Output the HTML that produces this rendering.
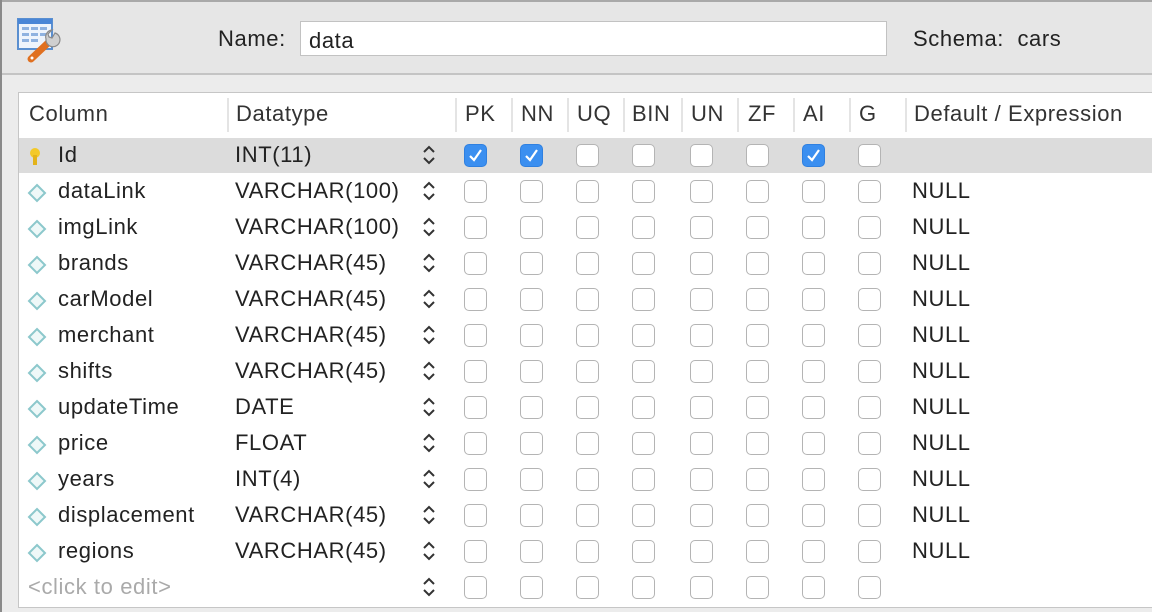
<!DOCTYPE html>
<html><head><meta charset="utf-8"><style>
*{margin:0;padding:0;box-sizing:border-box}
body{width:1152px;height:612px;overflow:hidden;background:#ececec;font-family:"Liberation Sans",sans-serif;position:relative;color:#222}
.top{position:absolute;left:0;top:0;width:1152px;height:75px;background:#e6e6e6;border-top:2px solid #a9a9a9;border-bottom:2px solid #c4c4c4}
.lb{position:absolute;left:0;top:0;width:2px;height:612px;background:#8a8a8a}
.t{position:absolute;font-size:22px;letter-spacing:0.6px;white-space:nowrap;line-height:24px}
.inp{position:absolute;left:300px;top:21px;width:587px;height:35px;background:#fff;border:1px solid #c2c2c2}
.tbl{position:absolute;left:18px;top:92px;width:1140px;height:516px;background:#fff;border:1px solid #c6c6c6}
.sel{position:absolute;left:19px;top:138px;width:1133px;height:35px;background:#dcdcdc}
.div{position:absolute;top:98px;width:2px;height:34px;background:#e4e4e4}
.cb{position:absolute;width:23px;height:23px;border:1px solid #b4b4b4;border-radius:5px;background:#fff}
.cb.on{background:#3b8ff0;border-color:#2f80e0}
</style></head><body>
<div class="top"></div><div class="lb"></div>
<svg style="position:absolute;left:17px;top:17px" width="48" height="48" viewBox="0 0 48 48">
<rect x="1" y="2" width="34" height="30" fill="#eef4fc" stroke="#5a8fd0" stroke-width="2"/>
<rect x="1" y="2" width="34" height="5" fill="#4a86d6"/>
<g fill="#8fb2e0"><rect x="5" y="10" width="7" height="3"/><rect x="14" y="10" width="7" height="3"/><rect x="23" y="10" width="7" height="3"/><rect x="5" y="16" width="7" height="3"/><rect x="14" y="16" width="7" height="3"/><rect x="23" y="16" width="7" height="3"/><rect x="5" y="22" width="7" height="3"/><rect x="14" y="22" width="7" height="3"/></g>
<path d="M14 42 L32 25" stroke="#e07020" stroke-width="7" stroke-linecap="round"/>
<path d="M29 22 A7 7 0 1 0 38 16 L35 21 L32 20 L31 17 L35 13 A7 7 0 0 0 29 22Z" fill="#cfcfcf" stroke="#8a8a8a" stroke-width="1.2"/>
<circle cx="15" cy="41" r="1.5" fill="#fff"/>
</svg>
<div class="t" style="left:218px;top:27px">Name:</div>
<div class="inp"></div>
<div class="t" style="left:309px;top:29px">data</div>
<div class="t" style="left:913px;top:27px">Schema:&nbsp; cars</div>
<div class="tbl"></div>
<div class="sel"></div>
<div id="g"></div>
<script>
var h='';
var hd=[["Column",29],["Datatype",236],["PK",465],["NN",521],["UQ",577],["BIN",632],["UN",691],["ZF",748],["AI",803],["G",859],["Default / Expression",914]];
hd.forEach(function(a){h+='<div class="t" style="left:'+a[1]+'px;top:102px;color:#333">'+a[0]+'</div>'});
[227,455,511,567,623,681,737,793,849,905].forEach(function(x){h+='<div class="div" style="left:'+x+'px"></div>'});
var rows=[["Id","INT(11)"],["dataLink","VARCHAR(100)"],["imgLink","VARCHAR(100)"],["brands","VARCHAR(45)"],["carModel","VARCHAR(45)"],["merchant","VARCHAR(45)"],["shifts","VARCHAR(45)"],["updateTime","DATE"],["price","FLOAT"],["years","INT(4)"],["displacement","VARCHAR(45)"],["regions","VARCHAR(45)"],["",""]];
var cx=[476,532,588,644,702,758,814,870];
rows.forEach(function(r,i){
 var c=155+36*i;
 if(i==0){h+='<svg style="position:absolute;left:29px;top:'+(c-8)+'px" width="12" height="20" viewBox="0 0 12 20"><ellipse cx="6" cy="6" rx="5" ry="5" fill="#f3c928"/><rect x="4" y="8" width="4" height="10" fill="#e3b31a"/></svg>';}
 else if(i<12){h+='<svg style="position:absolute;left:27px;top:'+(c-8)+'px" width="20" height="20" viewBox="0 0 20 20"><path d="M10 2 L18 10 L10 18 L2 10 Z" fill="#eef8f8" stroke="#8cc8cc" stroke-width="2"/></svg>';}
 if(i<12){h+='<div class="t" style="left:58px;top:'+(c-12)+'px">'+r[0]+'</div><div class="t" style="left:235px;top:'+(c-12)+'px">'+r[1]+'</div>';}
 else h+='<div class="t" style="left:28px;top:'+(c-12)+'px;color:#aaa">&lt;click to edit&gt;</div>';
 h+='<svg style="position:absolute;left:422px;top:'+(c-10)+'px" width="14" height="20" viewBox="0 0 14 20"><path d="M2 7 L7 2 L12 7 M2 13 L7 18 L12 13" fill="none" stroke="#333" stroke-width="2"/></svg>';
 cx.forEach(function(x,j){
  var on=(i==0&&(j==0||j==1||j==6));
  h+='<div class="cb'+(on?' on':'')+'" style="left:'+(x-12)+'px;top:'+(c-11)+'px">'+(on?'<svg width="21" height="21" viewBox="0 0 21 21"><path d="M5 11 L9 15 L16 5" fill="none" stroke="#fff" stroke-width="2.2"/></svg>':'')+'</div>';
 });
 if(i>0&&i<12)h+='<div class="t" style="left:912px;top:'+(c-12)+'px">NULL</div>';
});
document.getElementById('g').innerHTML=h;
</script>
</body></html>
